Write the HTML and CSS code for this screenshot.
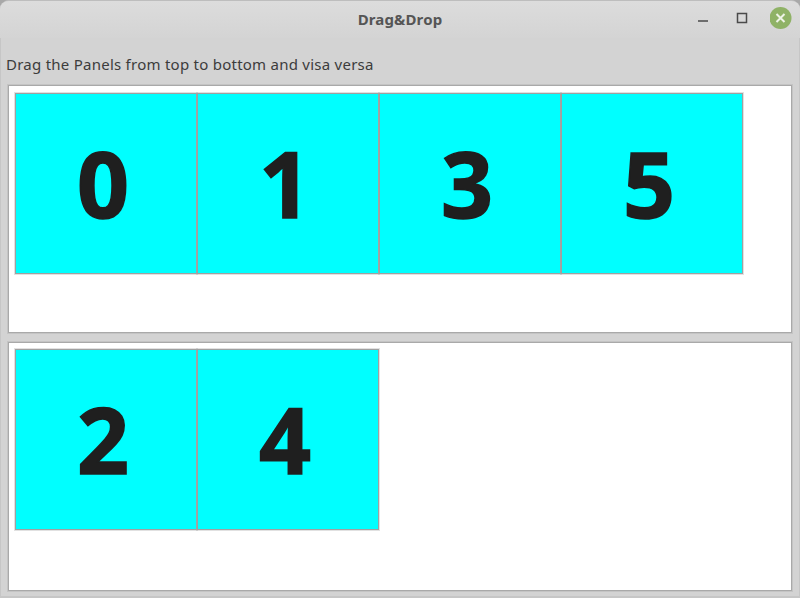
FILE: index.html
```html
<!DOCTYPE html>
<html lang="en">
<head>
  <meta charset="UTF-8">
  <title>Drag&amp;Drop</title>
  <link rel="stylesheet" href="styles.css">
</head>
<body>
  <div class="window">
    <header class="titlebar">
      <span class="title">Drag&amp;Drop</span>
      <div class="controls">
        <svg class="ctl" width="20" height="20" viewBox="0 0 20 20"><path d="M6 13h10" stroke="#4a4a4a" stroke-width="1.500" fill="none"/></svg>
        <svg class="ctl" width="20" height="20" viewBox="0 0 20 20"><rect x="6.500" y="5.500" width="9" height="9" stroke="#4a4a4a" stroke-width="1.500" fill="none"/></svg>
        <svg class="ctl" width="22" height="22" viewBox="0 0 22 22"><circle cx="10.500" cy="11" r="11" fill="#8fb266"/><path d="M6.500 7l8 8M14.500 7l-8 8" stroke="#eef3e6" stroke-width="2" fill="none"/></svg>
      </div>
    </header>
    <main class="content">
      <p class="hint">Drag the Panels from top to bottom and visa versa</p>
      <section class="panel panel-top">
        <div class="tile">0</div>
        <div class="tile">1</div>
        <div class="tile">3</div>
        <div class="tile">5</div>
      </section>
      <section class="panel panel-bottom">
        <div class="tile">2</div>
        <div class="tile">4</div>
      </section>
    </main>
  </div>
</body>
</html>
```

FILE: styles.css
```css
* {
  margin: 0;
  padding: 0;
  box-sizing: border-box;
}

body {
  width: 800px;
  height: 598px;
  overflow: hidden;
  background: #a8a8a8;
  font-family: 'Noto Sans', sans-serif;
}

.window {
  height: 598px;
  background: #d3d3d3;
  border-radius: 9px 9px 0 0;
  border-top: 1px solid #bdbdbd;
  box-shadow: inset 1px 0 0 #c6c6c6, inset -1px 0 0 #c6c6c6, inset 0 -2px 0 #c6c6c6;
  overflow: hidden;
}

/* Title bar */
.titlebar {
  position: relative;
  height: 37px;
  display: flex;
  align-items: center;
  justify-content: center;
  padding-bottom: 2px;
  background: linear-gradient(#dcdcdc, #d4d4d4);
}

.title {
  font-size: 15px;
  font-weight: 700;
  letter-spacing: 0.15px;
  color: #555;
}

.controls {
  position: absolute;
  right: 8px;
  top: 6px;
  display: flex;
  align-items: center;
  gap: 19px;
}

/* Content */
.content {
  padding: 0 8px;
}

.hint {
  height: 47px;
  margin-left: -2px;
  padding-top: 16px;
  font-size: 15px;
  letter-spacing: 0.25px;
  line-height: 20px;
  color: #3c3c3c;
}

.panel {
  display: flex;
  background: #fff;
  border: 1px solid #a9a9a9;
  box-shadow: 0 0 0 1px #c4c4c4;
  padding: 7px 6px;
}

.panel-top {
  height: 248px;
  margin-bottom: 9px;
}

.panel-bottom {
  height: 249px;
  padding-top: 6px;
}

.tile {
  width: 182px;
  height: 181px;
  padding: 0 6px 1px 0;
  display: flex;
  align-items: center;
  justify-content: center;
  background: #0ff;
  border: 1px solid #a0a0a0;
  box-shadow: 0 0 0 1px rgba(170, 170, 170, 0.35);
  font-family: 'Open Sans', sans-serif;
  font-size: 91px;
  font-weight: 700;
  -webkit-text-stroke: 1.5px #1f1f1f;
  color: #1f1f1f;
}
```
